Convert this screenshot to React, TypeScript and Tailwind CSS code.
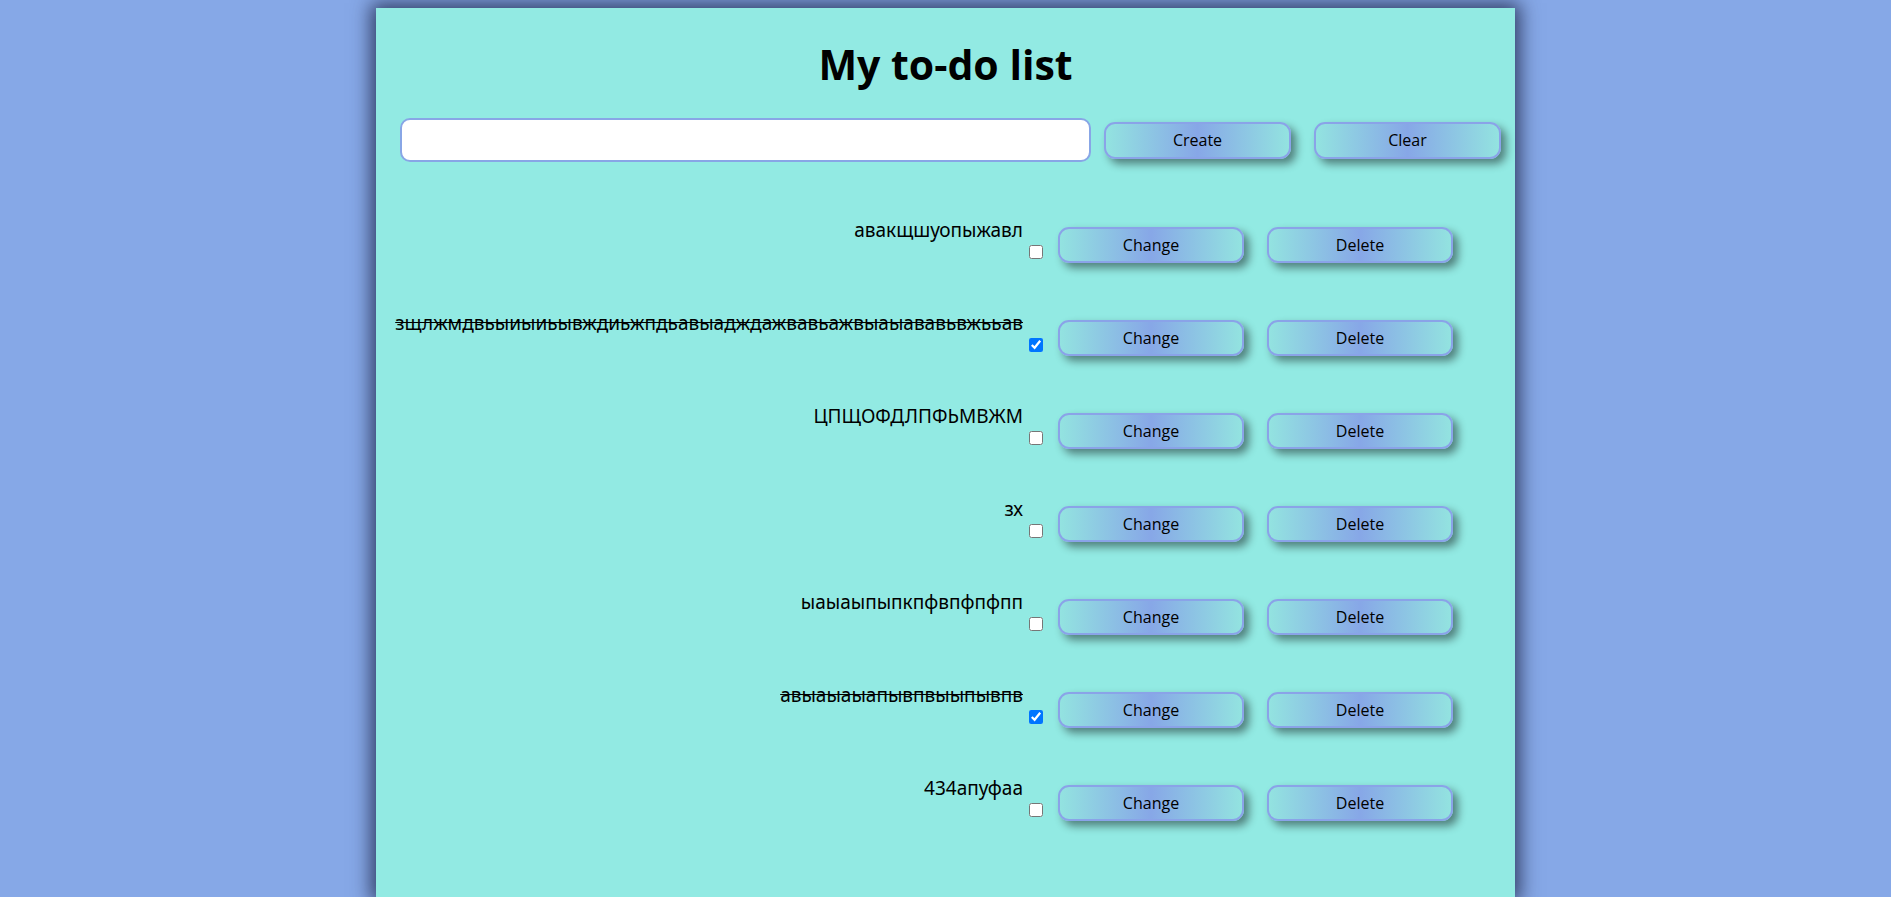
import { useState } from "react";

type Task = { id: number; text: string; done: boolean };

const initialTasks: Task[] = [
  { id: 1, text: "авакщшуопыжавл", done: false },
  { id: 2, text: "зщлжмдвьыиыиьывждиьжпдьавыадждажвавьажвыаыававьвжььав", done: true },
  { id: 3, text: "ЦПЩОФДЛПФЬМВЖМ", done: false },
  { id: 4, text: "зх", done: false },
  { id: 5, text: "ыаыаыпыпкпфвпфпфпп", done: false },
  { id: 6, text: "авыаыаыапывпвыыпывпв", done: true },
  { id: 7, text: "434апуфаа", done: false },
];

const comic = '"Comic Sans MS", "Open Sans", sans-serif';
const gothic = '"Century Gothic", "Noto Sans", sans-serif';

function GradButton({ label, className = "" }: { label: string; className?: string }) {
  return (
    <button
      className={`shrink-0 rounded-[11px] border-2 border-[#8aa3e8] bg-[linear-gradient(90deg,#93e3e0_0%,#87a7e7_50%,#93e3e0_100%)] text-[16px] text-black shadow-[5px_5px_8px_rgba(0,0,0,0.45)] ${className}`}
      style={{ fontFamily: comic }}
    >
      {label}
    </button>
  );
}

export default function App() {
  const [tasks, setTasks] = useState<Task[]>(initialTasks);
  const [draft, setDraft] = useState("");

  const toggle = (id: number) =>
    setTasks((ts) => ts.map((t) => (t.id === id ? { ...t, done: !t.done } : t)));

  return (
    <div className="min-h-screen w-full overflow-hidden bg-[#86a8e7] pt-[8px]">
      {/* main card */}
      <div className="ml-[376px] min-h-[889px] w-[1139px] bg-[#92eae3] pt-[36px] shadow-[0_0_18px_5px_rgba(35,45,80,0.85)]">
        <h1
          className="text-center text-[41px] font-bold leading-[40px] text-black"
          style={{ fontFamily: comic }}
        >
          My to-do list
        </h1>

        {/* create form */}
        <div className="mt-[34px] flex h-[44px] items-center">
          <input
            value={draft}
            onChange={(e) => setDraft(e.target.value)}
            className="ml-[24px] h-[44px] w-[691px] rounded-[10px] border-2 border-[#88a6e6] bg-white px-3 text-[16px] outline-none"
          />
          <GradButton label="Create" className="ml-[13px] h-[37px] w-[187px]" />
          <GradButton label="Clear" className="ml-[23px] h-[37px] w-[187px]" />
        </div>

        {/* task list */}
        <div className="ml-[10px] mt-[58px] w-[1084px]">
          {tasks.map((t) => (
            <div key={t.id} className="flex h-[93px] items-start">
              <div className="flex flex-1 flex-col items-end">
                <span
                  className={`mr-[23px] whitespace-nowrap text-[19px] leading-[20px] text-black ${t.done ? "line-through" : ""}`}
                  style={{ fontFamily: gothic }}
                >
                  {t.text}
                </span>
                <input
                  type="checkbox"
                  checked={t.done}
                  onChange={() => toggle(t.id)}
                  className="mr-[3px] mt-[5px] h-[14px] w-[14px]"
                />
              </div>
              <GradButton label="Change" className="ml-[12px] mt-[7px] h-[36px] w-[186px]" />
              <GradButton label="Delete" className="ml-[23px] mt-[7px] h-[36px] w-[186px]" />
              <div className="w-[17px] shrink-0" />
            </div>
          ))}
        </div>
      </div>
    </div>
  );
}
